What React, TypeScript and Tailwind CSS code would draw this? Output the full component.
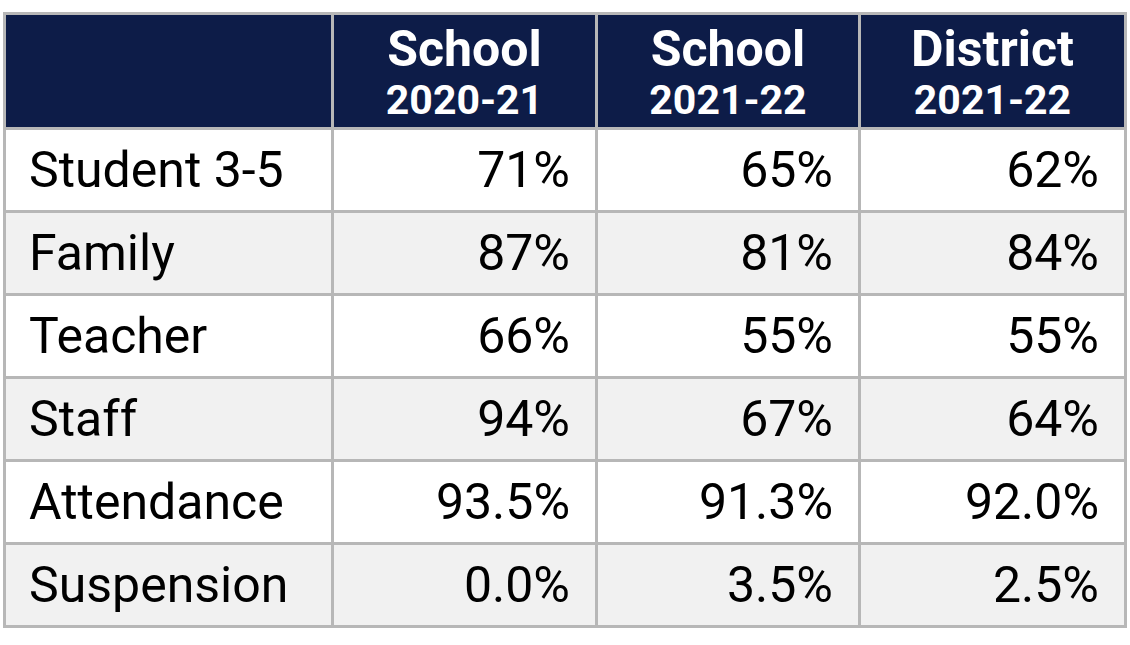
const header = [
  { title: "School", year: "2020-21" },
  { title: "School", year: "2021-22" },
  { title: "District", year: "2021-22" },
];

const rows = [
  { label: "Student 3-5", values: ["71%", "65%", "62%"] },
  { label: "Family", values: ["87%", "81%", "84%"] },
  { label: "Teacher", values: ["66%", "55%", "55%"] },
  { label: "Staff", values: ["94%", "67%", "64%"] },
  { label: "Attendance", values: ["93.5%", "91.3%", "92.0%"] },
  { label: "Suspension", values: ["0.0%", "3.5%", "2.5%"] },
];

export default function App() {
  return (
    <div className="h-[645px] w-[1130px] bg-white pl-[3px] pt-[12px] font-['Roboto',sans-serif]">
      <div className="grid w-[1124px] grid-cols-[325px_261px_260px_263px] gap-[3px] bg-[#b7b7b7] p-[3px]">
        <div className="h-[112px] bg-[#0d1c48]" />
        {header.map((h, i) => (
          <div
            key={i}
            className="flex h-[112px] flex-col items-center justify-center bg-[#0d1c48] pt-[2px] font-bold text-white"
          >
            <span className="text-[50px] leading-[56px]">{h.title}</span>
            <span className="text-[41px] leading-[46px]">{h.year}</span>
          </div>
        ))}
        {rows.map((r, i) => {
          const bg = i % 2 === 1 ? "bg-[#f1f1f1]" : "bg-white";
          return [
            <div
              key={`${i}-l`}
              className={`flex h-[80px] items-center pl-[23px] text-[50px] text-black ${bg}`}
            >
              {r.label}
            </div>,
            ...r.values.map((v, j) => (
              <div
                key={`${i}-${j}`}
                className={`flex h-[80px] items-center justify-end pr-[25px] text-[50px] text-black ${bg}`}
              >
                {v}
              </div>
            )),
          ];
        })}
      </div>
    </div>
  );
}
